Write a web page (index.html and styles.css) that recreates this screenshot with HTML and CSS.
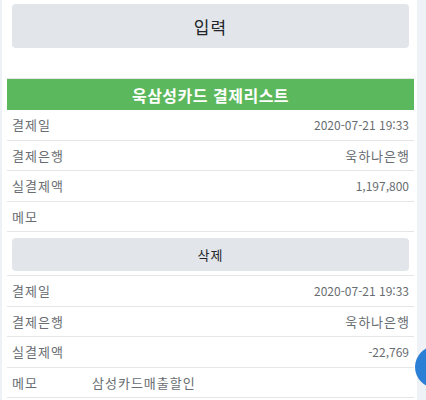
FILE: index.html
```html
<!DOCTYPE html>
<html lang="ko">
<head>
<meta charset="utf-8">
<link rel="stylesheet" href="styles.css">
</head>
<body>
<div class="screen">
  <div class="page">
    <div class="top">
      <button class="btn btn-input">입력</button>
    </div>
    <div class="list">
      <div class="list-head">욱삼성카드 결제리스트</div>
      <div class="row"><span class="label">결제일</span><span class="value num">2020-07-21 19:33</span></div>
      <div class="row"><span class="label">결제은행</span><span class="value">욱하나은행</span></div>
      <div class="row"><span class="label">실결제액</span><span class="value num">1,197,800</span></div>
      <div class="row"><span class="label">메모</span><span class="memo"></span></div>
      <div class="row row-btn"><button class="btn btn-del">삭제</button></div>
      <div class="row"><span class="label">결제일</span><span class="value num">2020-07-21 19:33</span></div>
      <div class="row"><span class="label">결제은행</span><span class="value">욱하나은행</span></div>
      <div class="row"><span class="label">실결제액</span><span class="value num">-22,769</span></div>
      <div class="row"><span class="label">메모</span><span class="memo">삼성카드매출할인</span></div>
    </div>
  </div>
  <div class="fab"></div>
</div>
</body>
</html>
```
FILE: styles.css
```css
html, body {
  margin: 0;
  padding: 0;
}
body {
  background: #eef1f6;
  font-family: "Noto Sans CJK KR", "Noto Sans", sans-serif;
}
* {
  box-sizing: border-box;
}
.screen {
  position: relative;
  width: 426px;
  height: 400px;
  overflow: hidden;
}
.page {
  margin-left: 2px;
  width: 415px;
  height: 400px;
  background: #fff;
}
.top {
  padding: 4px 8px 30px 10px;
}
.btn {
  display: block;
  width: 100%;
  border: 0;
  border-radius: 4px;
  background: #e2e6ea;
  color: #212529;
  font-family: inherit;
  cursor: pointer;
}
.btn-input {
  height: 44px;
  font-size: 17px;
  letter-spacing: 1px;
}
.list {
  margin: 0 3px 0 5px;
  border-top: 1px solid #e4e6ea;
}
.list-head {
  height: 31px;
  background: #5cb85c;
  color: #fff;
  font-weight: bold;
  font-size: 16px;
  letter-spacing: 0.5px;
  display: flex;
  align-items: center;
  justify-content: center;
}
.row {
  display: flex;
  align-items: center;
  height: 30.5px;
  border-bottom: 1px solid #e4e6ea;
  padding: 0 5px;
  font-size: 13px;
  color: #686d72;
  letter-spacing: 1px;
}
.label {
  width: 80px;
  flex: none;
}
.value {
  margin-left: auto;
  margin-right: -1px;
}
.num {
  font-size: 12px;
  letter-spacing: 0;
  margin-right: 0;
}
.memo {
  flex: 1;
}
.row-btn {
  height: 44px;
  align-items: flex-start;
  padding-top: 6px;
}
.btn-del {
  height: 33px;
  font-size: 13px;
  letter-spacing: 1px;
}
.fab {
  position: absolute;
  left: 415px;
  top: 346px;
  width: 42px;
  height: 42px;
  border-radius: 50%;
  background: #2b7fd4;
}
```
